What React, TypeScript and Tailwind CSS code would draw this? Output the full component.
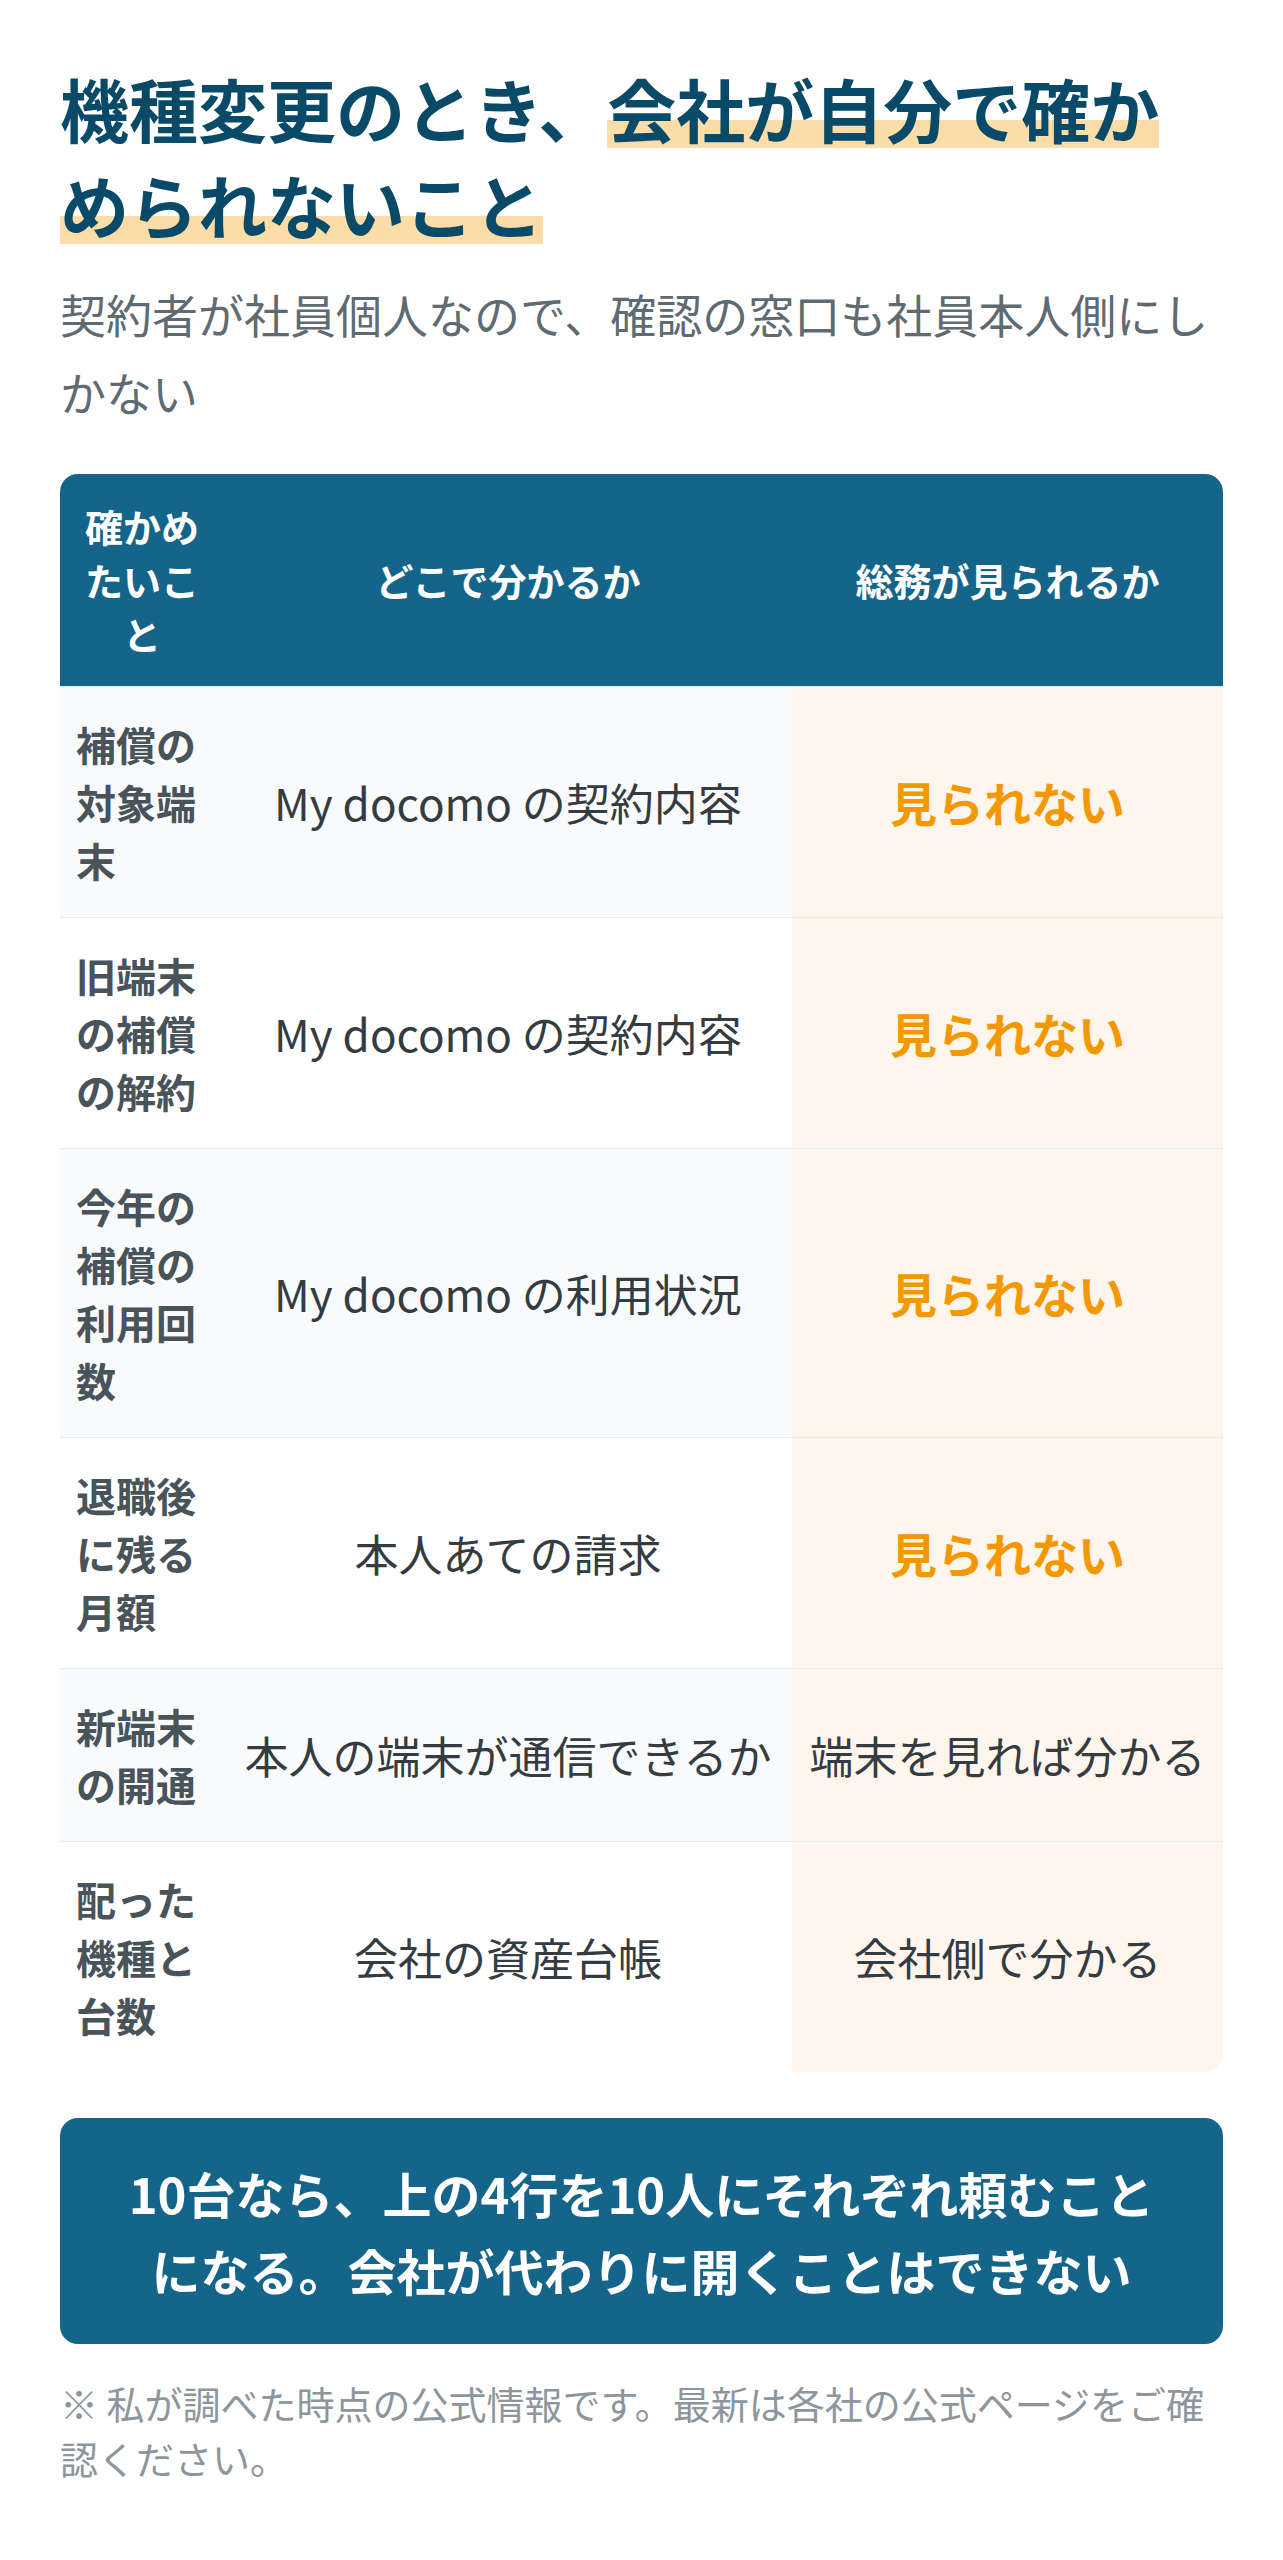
import { type FC } from "react";

interface Row {
	item: string;
	where: string;
	visible: string;
	hidden: boolean;
}

const rows: Row[] = [
	{ item: "補償の対象端末", where: "My docomo の契約内容", visible: "見られない", hidden: true },
	{ item: "旧端末の補償の解約", where: "My docomo の契約内容", visible: "見られない", hidden: true },
	{ item: "今年の補償の利用回数", where: "My docomo の利用状況", visible: "見られない", hidden: true },
	{ item: "退職後に残る月額", where: "本人あての請求", visible: "見られない", hidden: true },
	{ item: "新端末の開通", where: "本人の端末が通信できるか", visible: "端末を見れば分かる", hidden: false },
	{ item: "配った機種と台数", where: "会社の資産台帳", visible: "会社側で分かる", hidden: false },
];

const marker =
	"box-decoration-clone bg-[linear-gradient(transparent_62%,#fcdca7_62%,#fcdca7_90%,transparent_90%)]";

const CheckTable: FC = () => {
	return (
		<div className="mt-[44px] rounded-[18px] overflow-hidden">
			<table className="w-full table-fixed border-collapse">
				<colgroup>
					<col className="w-[164px]" />
					<col className="w-[568px]" />
					<col className="w-[431px]" />
				</colgroup>
				<thead>
					<tr className="bg-[#15658a] text-white text-[38px] leading-[54px] font-bold">
						<th className="px-3 py-[25px] text-center align-middle">確かめたいこと</th>
						<th className="px-4 py-[25px] text-center align-middle">どこで分かるか</th>
						<th className="px-4 py-[25px] text-center align-middle">総務が見られるか</th>
					</tr>
				</thead>
				<tbody>
					{rows.map((row, index) => (
						<tr
							key={row.item}
							className={`border-t border-[#e6edf1] ${index % 2 === 0 ? "bg-[#f8fafc]" : "bg-white"}`}
						>
							<td className="px-4 py-[28px] text-left align-middle text-[40px] leading-[58px] font-bold text-[#48535a]">
								{row.item}
							</td>
							<td className="px-4 py-[28px] text-center align-middle text-[44px] leading-[60px] text-[#343c41]">
								{row.where}
							</td>
							<td className="px-4 py-[28px] text-center align-middle bg-[#fef6ec]">
								{row.hidden ? (
									<span className="text-[47px] leading-[60px] font-bold text-[#f39800]">
										{row.visible}
									</span>
								) : (
									<span className="text-[44px] leading-[60px] text-[#343c41]">
										{row.visible}
									</span>
								)}
							</td>
						</tr>
					))}
				</tbody>
			</table>
		</div>
	);
};

export default function App() {
	return (
		<div className="min-h-screen bg-white px-[60px] pt-[60px] pb-[60px] font-['Noto_Sans_CJK_JP','Noto_Sans',sans-serif]">
			<h2 className="text-[69px] leading-[96px] font-bold text-[#0a4a69]">
				<span>機種変更のとき、</span>
				<span className={marker}>会社が自分で確か</span>
				<span className={marker}>められないこと</span>
			</h2>
			<p className="mt-[22px] text-[46px] leading-[78px] text-[#5f6b72]">
				契約者が社員個人なので、確認の窓口も社員本人側にしかない
			</p>

			<CheckTable />

			<div className="mt-[46px] rounded-[18px] bg-[#15658a] px-[56px] py-[36px] text-center text-[49px] leading-[77px] font-bold text-white">
				10台なら、上の4行を10人にそれぞれ頼むことになる。会社が代わりに開くことはできない
			</div>

			<p className="mt-[31px] text-[38px] leading-[55px] text-[#8c969c]">
				※ 私が調べた時点の公式情報です。最新は各社の公式ページをご確認ください。
			</p>
		</div>
	);
}
